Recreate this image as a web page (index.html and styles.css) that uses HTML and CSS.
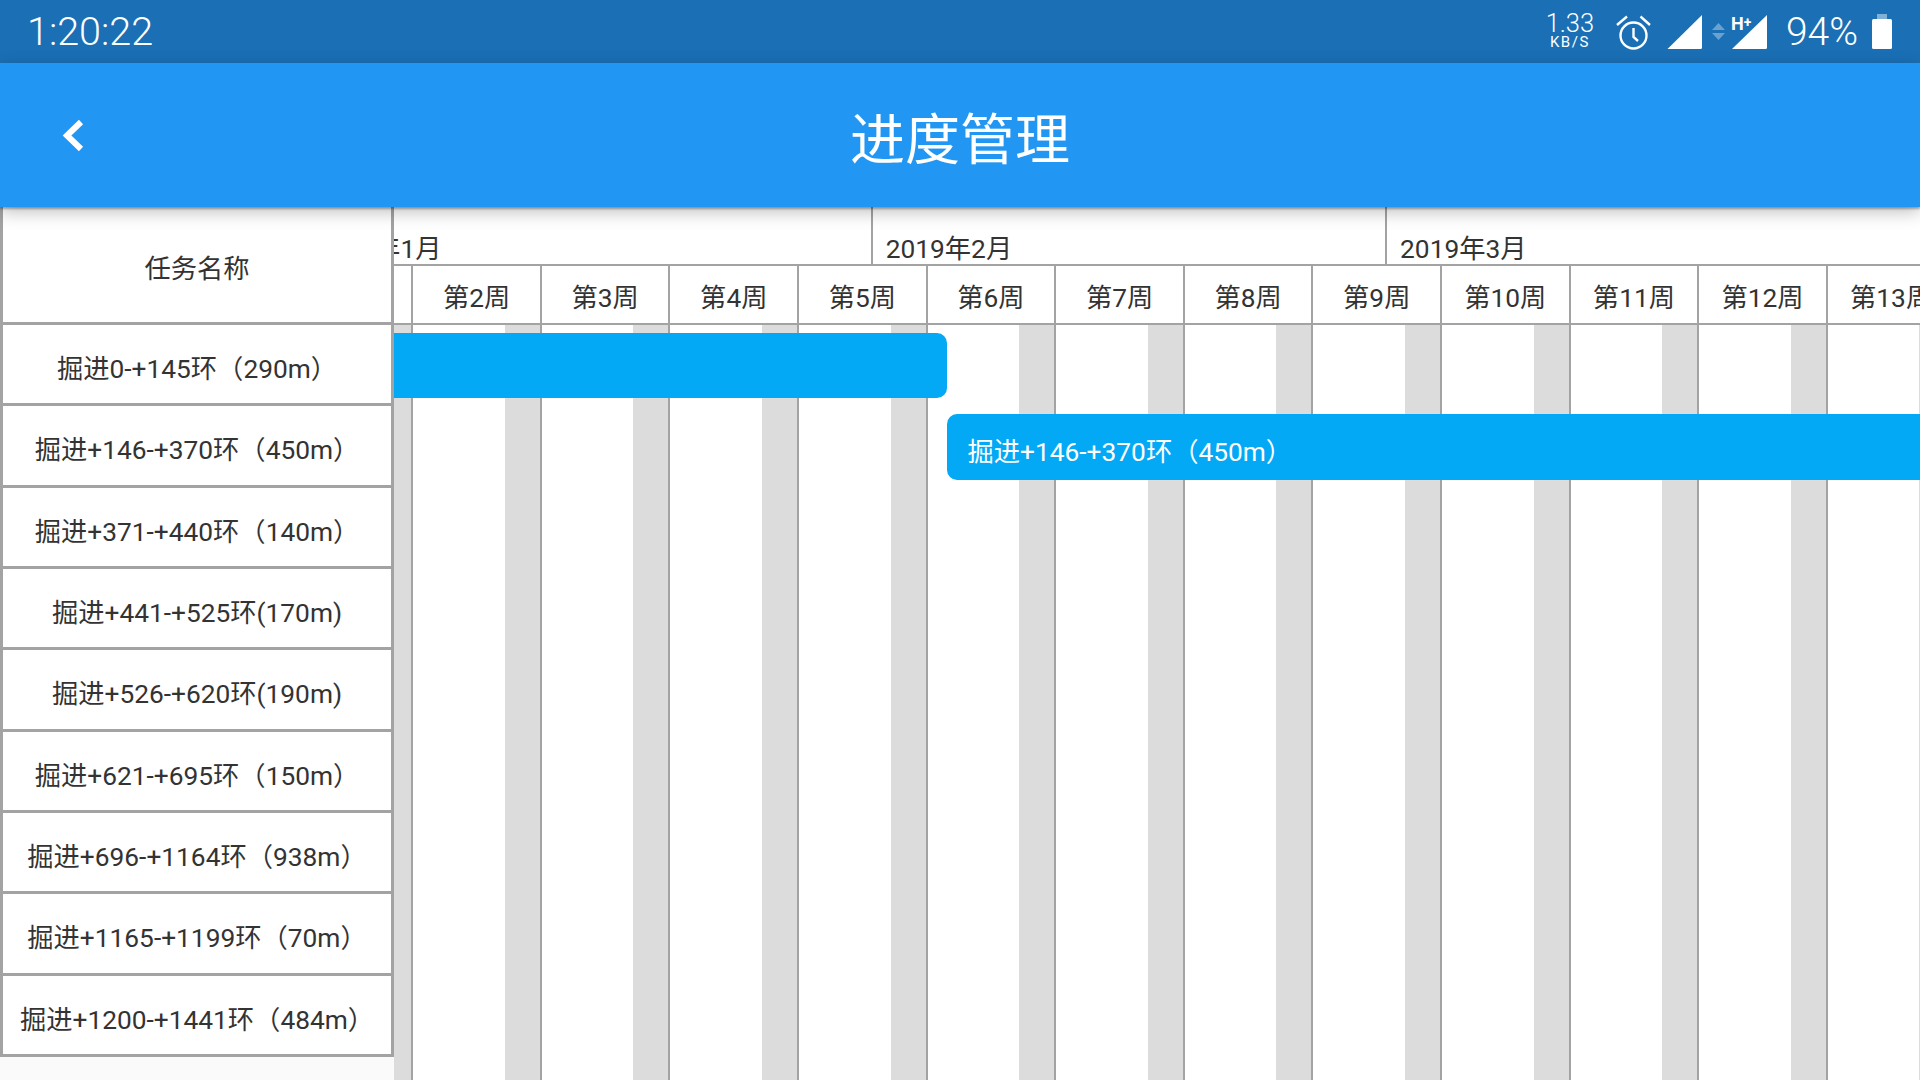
FILE: index.html
```html
<!DOCTYPE html>
<html lang="zh-CN">
<head>
    <meta charset="UTF-8">
    <meta name="viewport" content="width=device-width, initial-scale=1.0">
    <title>进度管理</title>
    <link rel="stylesheet" href="styles.css">
</head>
<body>
    <div class="status-bar">
        <span class="clock">1:20:22</span>
        <div class="status-icons">
            <div class="speed">
                <span class="speed-num">1.33</span>
                <span class="speed-unit">KB/S</span>
            </div>
            <svg class="icon-alarm" width="35" height="36" viewBox="0 0 35 36" fill="none" stroke="#fff" stroke-width="2.4">
                <circle cx="17.5" cy="21.5" r="13"/>
                <path d="M1 11 L11 2.5 M24.5 2.5 L34 11"/>
                <path d="M17.5 14 V23 L22 27"/>
            </svg>
            <svg class="icon-signal" width="35" height="34" viewBox="0 0 35 34" fill="#fff">
                <path d="M0.5 34 L35 0 V32.5 Q35 34 33.5 34 Z"/>
            </svg>
            <svg class="icon-arrows" width="13" height="18" viewBox="0 0 13 18" fill="#fff" fill-opacity="0.35">
                <path d="M6.5 0 L13 7 H0 Z"/>
                <path d="M0 10 H13 L6.5 17 Z"/>
            </svg>
            <svg class="icon-signal2" width="36" height="34" viewBox="0 0 36 34" fill="#fff">
                <path d="M1 34 L36 0 V32.5 Q36 34 34.5 34 Z"/>
                <text x="0" y="14.5" class="hplus">H<tspan class="hplus-sup" dy="-3">+</tspan></text>
            </svg>
            <span class="battery-pct">94%</span>
            <svg class="icon-battery" width="20" height="35" viewBox="0 0 20 35" fill="#fff">
                <rect x="5" y="0" width="10" height="6" fill-opacity="0.45"/>
                <rect x="0" y="5" width="20" height="30" rx="1.5"/>
            </svg>
        </div>
    </div>

    <header class="app-bar">
        <svg class="back" width="24" height="36" viewBox="0 0 24 36" fill="none" stroke="#fff" stroke-width="6">
            <path d="M20 4 L6 17.5 L20 31"/>
        </svg>
        <h1 class="title">进度管理</h1>
    </header>

    <main class="content">
        <section class="task-panel">
            <div class="task-head">任务名称</div>
            <div class="task-row">掘进0-+145环（290m）</div>
            <div class="task-row">掘进+146-+370环（450m）</div>
            <div class="task-row">掘进+371-+440环（140m）</div>
            <div class="task-row">掘进+441-+525环(170m)</div>
            <div class="task-row">掘进+526-+620环(190m)</div>
            <div class="task-row">掘进+621-+695环（150m）</div>
            <div class="task-row">掘进+696-+1164环（938m）</div>
            <div class="task-row">掘进+1165-+1199环（70m）</div>
            <div class="task-row">掘进+1200-+1441环（484m）</div>
        </section>

        <section class="chart">
            <div class="months">
                <div class="month month-first">2019年1月</div>
                <div class="month">2019年2月</div>
                <div class="month month-last">2019年3月</div>
            </div>
            <div class="weeks">
                <div class="week"><div class="week-label">第1周</div><div class="week-body"><div class="weekend"></div></div></div>
                <div class="week"><div class="week-label">第2周</div><div class="week-body"><div class="weekend"></div></div></div>
                <div class="week"><div class="week-label">第3周</div><div class="week-body"><div class="weekend"></div></div></div>
                <div class="week"><div class="week-label">第4周</div><div class="week-body"><div class="weekend"></div></div></div>
                <div class="week"><div class="week-label">第5周</div><div class="week-body"><div class="weekend"></div></div></div>
                <div class="week"><div class="week-label">第6周</div><div class="week-body"><div class="weekend"></div></div></div>
                <div class="week"><div class="week-label">第7周</div><div class="week-body"><div class="weekend"></div></div></div>
                <div class="week"><div class="week-label">第8周</div><div class="week-body"><div class="weekend"></div></div></div>
                <div class="week"><div class="week-label">第9周</div><div class="week-body"><div class="weekend"></div></div></div>
                <div class="week"><div class="week-label">第10周</div><div class="week-body"><div class="weekend"></div></div></div>
                <div class="week"><div class="week-label">第11周</div><div class="week-body"><div class="weekend"></div></div></div>
                <div class="week"><div class="week-label">第12周</div><div class="week-body"><div class="weekend"></div></div></div>
                <div class="week"><div class="week-label">第13周</div><div class="week-body"><div class="weekend"></div></div></div>
            </div>
            <div class="bar bar-one"></div>
            <div class="bar bar-two">掘进+146-+370环（450m）</div>
        </section>
    </main>
</body>
</html>
```

FILE: styles.css
```css
* {
    box-sizing: border-box;
}
html, body {
    height: 100%;
}
body {
    margin: 0;
    width: 1920px;
    height: 1080px;
    overflow: hidden;
    display: flex;
    flex-direction: column;
    background-color: #fafafa;
    color: #333;
    font-family: Roboto, "Noto Sans CJK SC", sans-serif;
    font-size: 26.3px;
}

/* status bar */
.status-bar {
    flex: 0 0 63px;
    display: flex;
    justify-content: space-between;
    align-items: center;
    padding: 0 28px 0 27px;
    background-color: #1a6fb5;
    color: #fff;
}
.clock {
    font-size: 39.5px;
    font-weight: 300;
}
.status-icons {
    display: flex;
    align-items: center;
}
.speed {
    display: flex;
    flex-direction: column;
    align-items: center;
    width: 48px;
    margin-top: -2px;
}
.speed-num {
    font-size: 25.5px;
    line-height: 24px;
    font-weight: 300;
}
.speed-unit {
    font-size: 15px;
    line-height: 15px;
    letter-spacing: 1.5px;
}
.icon-alarm {
    margin-left: 22px;
}
.icon-signal {
    margin-left: 16px;
}
.icon-arrows {
    margin-left: 10px;
}
.icon-signal2 {
    margin-left: 6px;
}
.hplus {
    font-family: Roboto, sans-serif;
    font-size: 18px;
    font-weight: 700;
}
.hplus-sup {
    font-size: 14px;
}
.battery-pct {
    margin-left: 19px;
    font-size: 39px;
    font-weight: 300;
}
.icon-battery {
    margin-left: 14px;
}

/* app bar */
.app-bar {
    flex: 0 0 144px;
    position: relative;
    z-index: 2;
    display: flex;
    justify-content: center;
    align-items: center;
    background-color: #2196f3;
    box-shadow: 0 2px 2px rgba(0, 0, 0, 0.3), 0 5px 16px rgba(0, 0, 0, 0.25);
}
.back {
    position: absolute;
    left: 61px;
    top: 55px;
}
.title {
    margin: -1px 0 0;
    color: #fff;
    font-size: 55px;
    font-weight: 400;
}

/* left column */
.content {
    flex: 1;
    display: flex;
    min-height: 0;
}
.task-panel {
    flex: 0 0 394px;
    align-self: flex-start;
    position: relative;
    z-index: 1;
    border-left: 3px solid #a3a3a3;
    border-right: 3px solid #a3a3a3;
    background-color: #fff;
}
.task-head,
.task-row {
    display: flex;
    justify-content: center;
    align-items: center;
    padding-top: 5px;
    border-bottom: 3px solid #a3a3a3;
    white-space: nowrap;
}
.task-head {
    height: 118px;
    padding-top: 3px;
}
.task-row {
    height: 81.33px;
}

/* gantt chart */
.chart {
    flex: 1;
    position: relative;
    overflow: hidden;
    display: flex;
    flex-direction: column;
    background-color: #fff;
}
.months {
    flex: 0 0 59px;
    display: flex;
    border-bottom: 2px solid #a3a3a3;
}
.month {
    flex: 0 0 514.4px;
    display: flex;
    align-items: flex-end;
    padding: 0 0 0 13px;
    border-right: 2px solid #a3a3a3;
    line-height: 30px;
    white-space: nowrap;
}
.month-first {
    flex-basis: 572.7px;
    margin-left: -94px;
    padding-left: 15px;
}
.month-last {
    flex: 1 0 600px;
    border-right: none;
}
.weeks {
    flex: 1;
    display: flex;
    margin-left: -109.3px;
}
.week {
    flex: 0 0 128.6px;
    display: flex;
    flex-direction: column;
    border-right: 2px solid #a3a3a3;
}
.week-label {
    flex: 0 0 59px;
    display: flex;
    justify-content: center;
    align-items: center;
    padding-top: 2px;
    border-bottom: 2px solid #a3a3a3;
    white-space: nowrap;
}
.week-body {
    flex: 1;
    display: flex;
    justify-content: flex-end;
}
.weekend {
    width: 35px;
    background-color: #dcdcdc;
}
.bar {
    position: absolute;
    height: 65px;
    background-color: #03a9f4;
    color: #fff;
    display: flex;
    align-items: center;
    padding: 4px 0 0 21px;
    white-space: nowrap;
}
.bar-one {
    top: 126px;
    left: -20px;
    width: 572.5px;
    border-radius: 10px;
}
.bar-two {
    top: 207px;
    left: 552.5px;
    width: 1000px;
    height: 66px;
    border-radius: 10px;
}
```
